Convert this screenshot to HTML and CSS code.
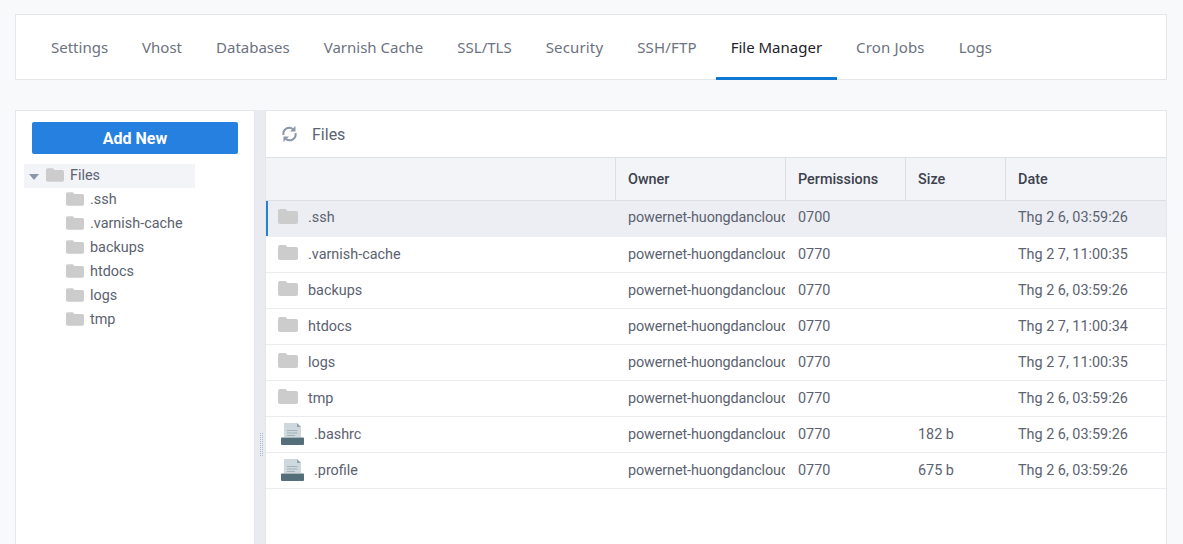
FILE: index.html
```html
<!DOCTYPE html>
<html lang="vi">
<head>
<meta charset="utf-8">
<title>File Manager</title>
<link rel="stylesheet" href="styles.css">
</head>
<body>
<svg class="defs" width="0" height="0" aria-hidden="true">
  <defs>
    <symbol id="folder" viewBox="0 0 20 15">
      <path d="M2 0H7.500L9.500 2H18A2 2 0 0 1 20 4V13A2 2 0 0 1 18 15H2A2 2 0 0 1 0 13V2A2 2 0 0 1 2 0Z" fill="#cccccc"/>
    </symbol>
    <symbol id="file" viewBox="0 0 23 22">
      <path d="M3 0H16L20 4V14H3Z" fill="#cfd8dc"/>
      <path d="M16 0L20 4H16Z" fill="#90a4ae"/>
      <path d="M6 7.500H16.500M6 10H16.500M6 12.500H14" stroke="#a3b3bc" stroke-width="1"/>
      <path d="M1 14.500H22A1 1 0 0 1 23 15.500V21A1 1 0 0 1 22 22H1A1 1 0 0 1 0 21V15.500A1 1 0 0 1 1 14.500Z" fill="#546e7a"/>
    </symbol>
  </defs>
</svg>

<nav class="tabs">
  <a class="tab">Settings</a>
  <a class="tab">Vhost</a>
  <a class="tab">Databases</a>
  <a class="tab">Varnish Cache</a>
  <a class="tab">SSL/TLS</a>
  <a class="tab tab-wide">Security</a>
  <a class="tab tab-wide">SSH/FTP</a>
  <a class="tab tab-active">File Manager</a>
  <a class="tab tab-wide">Cron Jobs</a>
  <a class="tab">Logs</a>
</nav>

<main class="manager">
  <aside class="tree-pane">
    <button class="add-new">Add New</button>
    <div class="tree-root">
      <span class="caret"></span>
      <svg class="tree-folder"><use href="#folder"/></svg>
      <span>Files</span>
    </div>
    <ul class="tree-list">
      <li class="tree-item"><svg class="tree-folder"><use href="#folder"/></svg><span>.ssh</span></li>
      <li class="tree-item"><svg class="tree-folder"><use href="#folder"/></svg><span>.varnish-cache</span></li>
      <li class="tree-item"><svg class="tree-folder"><use href="#folder"/></svg><span>backups</span></li>
      <li class="tree-item"><svg class="tree-folder"><use href="#folder"/></svg><span>htdocs</span></li>
      <li class="tree-item"><svg class="tree-folder"><use href="#folder"/></svg><span>logs</span></li>
      <li class="tree-item"><svg class="tree-folder"><use href="#folder"/></svg><span>tmp</span></li>
    </ul>
  </aside>

  <div class="splitter"><span class="grip"></span></div>

  <section class="files-pane">
    <header class="files-head">
      <svg class="refresh" viewBox="0 0 15 18" fill="none" stroke="#8a97a8" stroke-width="2">
        <path d="M1.500 10A6 6 0 0 1 11 4"/>
        <path d="M13.500 8A6 6 0 0 1 4 14"/>
        <path d="M13.500 1V6.500H8Z" fill="#8a97a8" stroke="none"/>
        <path d="M1.500 17V11.500H7Z" fill="#8a97a8" stroke="none"/>
      </svg>
      <span>Files</span>
    </header>
    <div class="grid">
      <div class="row row-head">
        <div class="c c-name"></div>
        <div class="c c-owner">Owner</div>
        <div class="c c-perm">Permissions</div>
        <div class="c c-size">Size</div>
        <div class="c c-date">Date</div>
      </div>
      <div class="row row-selected">
        <div class="c c-name"><svg class="folder-icon"><use href="#folder"/></svg><span>.ssh</span></div>
        <div class="c c-owner"><span class="clip">powernet-huongdancloud</span></div>
        <div class="c c-perm">0700</div><div class="c c-size"></div><div class="c c-date">Thg 2 6, 03:59:26</div>
      </div>
      <div class="row">
        <div class="c c-name"><svg class="folder-icon"><use href="#folder"/></svg><span>.varnish-cache</span></div>
        <div class="c c-owner"><span class="clip">powernet-huongdancloud</span></div>
        <div class="c c-perm">0770</div><div class="c c-size"></div><div class="c c-date">Thg 2 7, 11:00:35</div>
      </div>
      <div class="row">
        <div class="c c-name"><svg class="folder-icon"><use href="#folder"/></svg><span>backups</span></div>
        <div class="c c-owner"><span class="clip">powernet-huongdancloud</span></div>
        <div class="c c-perm">0770</div><div class="c c-size"></div><div class="c c-date">Thg 2 6, 03:59:26</div>
      </div>
      <div class="row">
        <div class="c c-name"><svg class="folder-icon"><use href="#folder"/></svg><span>htdocs</span></div>
        <div class="c c-owner"><span class="clip">powernet-huongdancloud</span></div>
        <div class="c c-perm">0770</div><div class="c c-size"></div><div class="c c-date">Thg 2 7, 11:00:34</div>
      </div>
      <div class="row">
        <div class="c c-name"><svg class="folder-icon"><use href="#folder"/></svg><span>logs</span></div>
        <div class="c c-owner"><span class="clip">powernet-huongdancloud</span></div>
        <div class="c c-perm">0770</div><div class="c c-size"></div><div class="c c-date">Thg 2 7, 11:00:35</div>
      </div>
      <div class="row">
        <div class="c c-name"><svg class="folder-icon"><use href="#folder"/></svg><span>tmp</span></div>
        <div class="c c-owner"><span class="clip">powernet-huongdancloud</span></div>
        <div class="c c-perm">0770</div><div class="c c-size"></div><div class="c c-date">Thg 2 6, 03:59:26</div>
      </div>
      <div class="row">
        <div class="c c-name"><svg class="file-icon"><use href="#file"/></svg><span>.bashrc</span></div>
        <div class="c c-owner"><span class="clip">powernet-huongdancloud</span></div>
        <div class="c c-perm">0770</div><div class="c c-size">182 b</div><div class="c c-date">Thg 2 6, 03:59:26</div>
      </div>
      <div class="row">
        <div class="c c-name"><svg class="file-icon"><use href="#file"/></svg><span>.profile</span></div>
        <div class="c c-owner"><span class="clip">powernet-huongdancloud</span></div>
        <div class="c c-perm">0770</div><div class="c c-size">675 b</div><div class="c c-date">Thg 2 6, 03:59:26</div>
      </div>
    </div>
  </section>
</main>
</body>
</html>
```
FILE: styles.css
```css
* { box-sizing: border-box; }
html, body { height: 100%; }
body {
  margin: 0;
  padding: 14px 16px 0 15px;
  background: #f8f9fb;
  color: #5b6270;
  font-family: Roboto, "Liberation Sans", sans-serif;
  font-size: 14.400px;
  overflow: hidden;
}
.defs { position: absolute; }

.tabs {
  display: flex;
  height: 66px;
  padding: 0 20px;
  background: #fff;
  border: 1px solid #e4e6ea;
  gap: 4px;
}
.tab {
  display: flex;
  align-items: center;
  height: 65px;
  padding: 1px 15px 0;
  font-family: "Noto Sans", sans-serif;
  font-size: 15px;
  color: #6b7280;
  border-bottom: 3px solid transparent;
}
.tab-wide { letter-spacing: 0.150px; }
.tab-active {
  color: #1d2229;
  border-bottom-color: #0f78d2;
}

.manager {
  display: flex;
  margin-top: 30px;
  height: 434px;
}
.tree-pane {
  width: 240px;
  background: #fff;
  border: 1px solid #e4e6ea;
  border-bottom: 0;
  padding: 11px 8px 0;
}
.add-new {
  display: block;
  width: 206px;
  height: 32px;
  margin: 0 0 10px 8px;
  background: #2680e0;
  color: #fff;
  border: 0;
  border-radius: 2px;
  font-family: Roboto, sans-serif;
  font-size: 16px;
  font-weight: 700;
}
.tree-root {
  display: flex;
  align-items: center;
  width: 171px;
  height: 24px;
  background: #f3f4f8;
  padding: 0 0 2px 5px;
}
.caret {
  width: 0;
  height: 0;
  border-left: 5px solid transparent;
  border-right: 5px solid transparent;
  border-top: 6px solid #8a97a8;
  margin: 4px 7px 0 0;
}
.tree-folder {
  width: 18px;
  height: 14px;
  margin-right: 6px;
  flex: none;
  margin-top: -1px;
}
.tree-list {
  list-style: none;
  margin: 0;
  padding: 0 0 0 42px;
}
.tree-item {
  display: flex;
  align-items: center;
  height: 24px;
  padding-bottom: 2px;
}

.splitter {
  position: relative;
  width: 10px;
  background: #e9ebf0;
  flex: none;
}
.grip {
  position: absolute;
  left: 4px;
  top: 323px;
  width: 4px;
  height: 24px;
  background-image:
    repeating-linear-gradient(0deg, #e9ebf0 0 1px, transparent 1px 2px),
    repeating-linear-gradient(90deg, #e9ebf0 0 1px, #a9bbd0 1px 2px);
}

.files-pane {
  flex: 1;
  min-width: 0;
  background: #fff;
  border: 1px solid #e4e6ea;
  border-bottom: 0;
}
.files-head {
  display: flex;
  align-items: center;
  height: 46px;
  padding-left: 16px;
  font-size: 16px;
  color: #5b6270;
  gap: 15px;
}
.refresh { width: 15px; height: 18px; flex: none; }

.row {
  display: flex;
  height: 36px;
  border-bottom: 1px solid #e9ebef;
  color: #5b6270;
}
.row-head {
  height: 44px;
  background: #f3f4f8;
  border-top: 1px solid #dcdfe4;
  border-bottom: 1px solid #dcdfe4;
  font-weight: 500;
  color: #3c424d;
}
.c + .c { border-left: 1px solid transparent; }
.row-head .c + .c { border-left-color: #dcdfe4; }
.row-selected {
  padding-bottom: 2px;
  background: #edeef3;
  border-bottom-color: #edeef3;
  box-shadow: inset 2px 0 0 #2680e0;
}
.c {
  display: flex;
  align-items: center;
  padding: 0 12px;
  overflow: hidden;
  white-space: nowrap;
  flex: none;
}
.c-name { width: 349px; }
.c-owner { width: 170px; padding-right: 0; }
.c-perm { width: 120px; }
.c-size { width: 100px; }
.c-date { flex: 1; min-width: 0; }
.clip { display: block; overflow: hidden; letter-spacing: -0.100px; }
.folder-icon {
  width: 20px;
  height: 15px;
  margin: -4px 10px 0 0;
  flex: none;
}
.row-selected .folder-icon { margin-top: -2px; }
.file-icon {
  width: 23px;
  height: 22px;
  margin: -2px 10px 0 3px;
  flex: none;
}
```
